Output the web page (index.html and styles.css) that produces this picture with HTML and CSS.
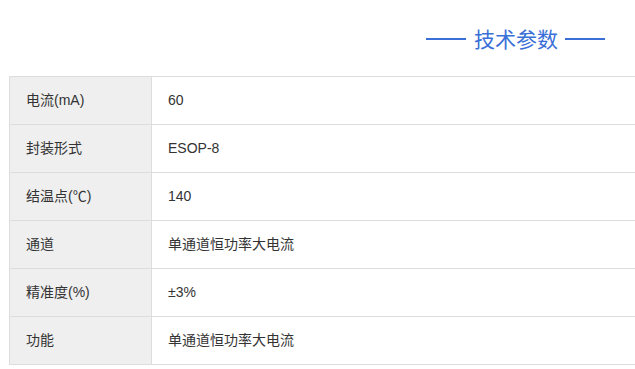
FILE: index.html
```html
<!DOCTYPE html>
<html lang="zh-CN">
<head>
<meta charset="utf-8">
<title>技术参数</title>
<link rel="stylesheet" href="styles.css">
</head>
<body>
<div class="page">
  <h2 class="section-title"><span class="title-text">技术参数</span></h2>
  <table class="spec-table">
    <tbody>
      <tr><th>电流(mA)</th><td>60</td></tr>
      <tr><th>封装形式</th><td>ESOP-8</td></tr>
      <tr><th>结温点(℃)</th><td>140</td></tr>
      <tr><th>通道</th><td>单通道恒功率大电流</td></tr>
      <tr><th>精准度(%)</th><td>±3%</td></tr>
      <tr><th>功能</th><td>单通道恒功率大电流</td></tr>
    </tbody>
  </table>
</div>
</body>
</html>
```
FILE: styles.css
```css
html, body {
  margin: 0;
  padding: 0;
  background: #fff;
  overflow: hidden;
}

.page {
  width: 700px;
  font-family: "Liberation Sans", "Noto Sans CJK SC", sans-serif;
  color: #333;
}

.section-title {
  margin: 0;
  height: 76px;
  box-sizing: border-box;
  padding: 0 0 0 426px;
  display: flex;
  align-items: flex-start;
  font-family: "Noto Sans CJK SC", sans-serif;
  font-size: 21px;
  font-weight: normal;
  color: #3a6fd8;
  white-space: nowrap;
}

/* short rules on either side of the heading */
.section-title::before,
.section-title::after {
  content: "";
  width: 40px;
  height: 2px;
  margin-top: 38px;
  background: #3a6fd8;
}

.title-text {
  line-height: 28px;
  margin: 24px 7px 0 8px;
}

.spec-table {
  margin-left: 9px;
  width: 680px;
  border-collapse: collapse;
  font-size: 14px;
}

.spec-table th,
.spec-table td {
  height: 48px;
  padding: 0 16px 2px;
  box-sizing: border-box;
  border: 1px solid #dddddd;
  text-align: left;
  font-weight: normal;
  line-height: 20px;
}

.spec-table th {
  width: 142px;
  background: #efefef;
}
```
